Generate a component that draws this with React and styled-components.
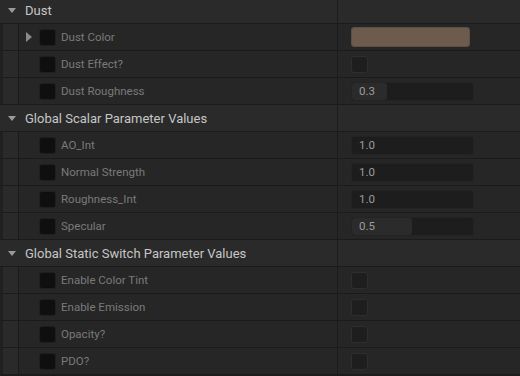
import React from "react";
import styled, { createGlobalStyle } from "styled-components";

const GlobalStyle = createGlobalStyle`
  html, body { margin: 0; padding: 0; background: #1c1c1c; }
  * { box-sizing: border-box; }
`;

const Panel = styled.div`
  width: 520px;
  height: 376px;
  overflow: hidden;
  background: #1c1c1c;
  font-family: Roboto, "Liberation Sans", sans-serif;
`;

const List = styled.div`
  margin-top: -3px;
  display: flex;
  flex-direction: column;
`;

const Header = styled.div`
  display: grid;
  grid-template-columns: 338px 1fr;
  height: 27px;
  background: #2a2a2a;
  border-bottom: 1px solid #1b1b1b;
`;

const HeaderName = styled.div`
  display: flex;
  align-items: center;
  padding-left: 8px;
  gap: 9px;
  border-right: 1px solid #1b1b1b;
  color: #c6c6c6;
  font-size: 13px;
`;

const Row = styled.div`
  display: grid;
  grid-template-columns: 335px 1fr;
  height: 27px;
  background: #262626;
  border-bottom: 1px solid #1b1b1b;
  border-left: 3px solid #202020;
`;

const NameCell = styled.div`
  display: flex;
  align-items: center;
  border-right: 1px solid #1b1b1b;
`;

const Gutter = styled.div`
  width: 16px;
  align-self: stretch;
  background: #2a2a2a;
  border-right: 1px solid #1b1b1b;
`;

const ArrowSlot = styled.div`
  width: 20px;
  display: flex;
  align-items: center;
  padding-left: 7px;
`;

const Check = styled.div`
  width: 17px;
  height: 17px;
  border-radius: 3px;
  background: ${(p) => (p.$value ? "#1e1e1e" : "#0f0f0f")};
  border: 1px solid ${(p) => (p.$value ? "#2e2e2e" : "#1f1f1f")};
  flex: none;
`;

const Label = styled.span`
  margin-left: 5px;
  color: #7a7a7a;
  font-size: 11.5px;
`;

const ValueCell = styled.div`
  display: flex;
  align-items: center;
  padding-left: 13px;
`;

const Swatch = styled.div`
  width: 119px;
  height: 20px;
  border-radius: 3px;
  background: #6d5b4d;
  border: 1px solid #5e4f43;
`;

const NumberField = styled.div`
  position: relative;
  width: 123px;
  height: 19px;
  border-radius: 3px;
  background: #1d1d1d;
  border: 1px solid #232323;
  overflow: hidden;
  display: flex;
  align-items: center;
`;

const Fill = styled.div`
  position: absolute;
  left: 0;
  top: 0;
  bottom: 0;
  border-radius: 3px;
  background: #2b2b2b;
`;

const NumText = styled.span`
  position: relative;
  padding-left: 7px;
  color: #9c9c9c;
  font-size: 11.5px;
`;

const DownTri = () => (
  <svg width="8" height="5" viewBox="0 0 8 5">
    <path d="M0 0 L8 0 L4 5 Z" fill="#9a9a9a" />
  </svg>
);

const RightTri = () => (
  <svg width="6" height="10" viewBox="0 0 6 10">
    <path d="M0 0 L6 5 L0 10 Z" fill="#8a8a8a" />
  </svg>
);

const sections = [
  {
    title: "Dust",
    rows: [
      { label: "Dust Color", expand: true, value: { type: "color" } },
      { label: "Dust Effect?", value: { type: "bool" } },
      { label: "Dust Roughness", value: { type: "num", text: "0.3", fill: 35 } },
    ],
  },
  {
    title: "Global Scalar Parameter Values",
    rows: [
      { label: "AO_Int", value: { type: "num", text: "1.0" } },
      { label: "Normal Strength", value: { type: "num", text: "1.0" } },
      { label: "Roughness_Int", value: { type: "num", text: "1.0" } },
      { label: "Specular", value: { type: "num", text: "0.5", fill: 60 } },
    ],
  },
  {
    title: "Global Static Switch Parameter Values",
    rows: [
      { label: "Enable Color Tint", value: { type: "bool" } },
      { label: "Enable Emission", value: { type: "bool" } },
      { label: "Opacity?", value: { type: "bool" } },
      { label: "PDO?", value: { type: "bool" } },
    ],
  },
];

function Value({ v }) {
  if (v.type === "color") return <Swatch />;
  if (v.type === "bool") return <Check $value />;
  return (
    <NumberField>
      {v.fill ? <Fill style={{ width: v.fill }} /> : null}
      <NumText>{v.text}</NumText>
    </NumberField>
  );
}

export default function App() {
  return (
    <Panel>
      <GlobalStyle />
      <List>
        {sections.map((s) => (
          <React.Fragment key={s.title}>
            <Header>
              <HeaderName>
                <DownTri />
                <span>{s.title}</span>
              </HeaderName>
              <div />
            </Header>
            {s.rows.map((r) => (
              <Row key={r.label}>
                <NameCell>
                  <Gutter />
                  <ArrowSlot>{r.expand ? <RightTri /> : null}</ArrowSlot>
                  <Check />
                  <Label>{r.label}</Label>
                </NameCell>
                <ValueCell>
                  <Value v={r.value} />
                </ValueCell>
              </Row>
            ))}
          </React.Fragment>
        ))}
      </List>
    </Panel>
  );
}
